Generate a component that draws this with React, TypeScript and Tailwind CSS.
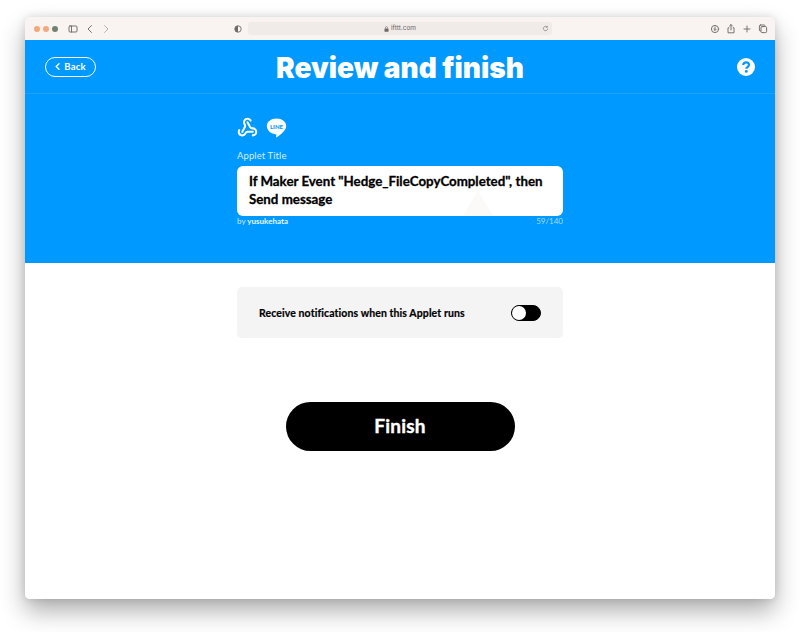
import React from "react";
import { Webhook } from "lucide-react";

function ToolbarIcon({ children, className }: { children: React.ReactNode; className?: string }) {
  return (
    <svg width="12" height="12" viewBox="0 0 12 12" fill="none" stroke="#77726f" strokeWidth="1" strokeLinecap="round" strokeLinejoin="round" className={className}>
      {children}
    </svg>
  );
}

export default function App() {
  return (
    <div className="w-[800px] h-[632px] bg-white pt-[17px] px-[25px] overflow-hidden font-['Lato',sans-serif]">
      <div className="w-[750px] h-[582px] flex flex-col bg-white rounded-t-[6px] rounded-b-[5px] overflow-hidden shadow-[0_12px_24px_rgba(0,0,0,0.32),0_0_8px_rgba(0,0,0,0.12)]">
        {/* Browser toolbar */}
        <div className="h-[23px] shrink-0 bg-[#f9f3f1] flex items-center relative">
          <div className="flex items-center gap-[3px] ml-[8.5px]">
            <span className="w-[6px] h-[6px] rounded-full bg-[#f3a876]" />
            <span className="w-[6px] h-[6px] rounded-full bg-[#f1aa7c]" />
            <span className="w-[6px] h-[6px] rounded-full bg-[#74806f]" />
          </div>
          <ToolbarIcon className="ml-[9.5px]">
            <rect x="2" y="3" width="8" height="6" rx="1" />
            <path d="M4.5 3v6" />
          </ToolbarIcon>
          <ToolbarIcon className="ml-[5px]">
            <path d="M7.5 2.5 4 6l3.5 3.5" />
          </ToolbarIcon>
          <ToolbarIcon className="ml-[3.6px] opacity-50">
            <path d="M4.5 2.5 8 6l-3.5 3.5" />
          </ToolbarIcon>
          <svg width="8" height="8" viewBox="0 0 8 8" className="ml-[122.4px]">
            <circle cx="4" cy="4" r="3.2" fill="#f9f3f1" stroke="#6f6b69" strokeWidth="0.9" />
            <path d="M4 .8a3.2 3.2 0 0 0 0 6.4z" fill="#6f6b69" />
          </svg>
          <div className="ml-[6px] w-[304px] h-[13px] rounded-[3px] bg-[#f0eae8] flex items-center justify-center gap-[2px] relative">
            <svg width="5" height="6" viewBox="0 0 5 6">
              <rect x=".5" y="2.500" width="4" height="3.200" rx=".5" fill="#6d6967" />
              <path d="M1.400 2.600V1.700a1.100 1.100 0 0 1 2.200 0v.9" fill="none" stroke="#6d6967" strokeWidth=".6" />
            </svg>
            <span className="text-[6.5px] leading-none text-[#6d6967] font-['Inter',sans-serif]">ifttt.com</span>
            <svg width="7" height="7" viewBox="0 0 8 8" fill="none" stroke="#8b8684" strokeWidth="0.9" className="absolute right-[3px] top-[3px]">
              <path d="M6.5 4a2.5 2.5 0 1 1-.8-1.8M6 1v1.6H4.4" />
            </svg>
          </div>
          <div className="ml-auto mr-[6.500px] flex items-center gap-[4px]">
            <ToolbarIcon>
              <circle cx="6" cy="6" r="3.6" />
              <path d="M6 4v3.2M4.8 6.200 6 7.400l1.200-1.200" />
            </ToolbarIcon>
            <ToolbarIcon>
              <path d="M3.800 4.800H3v5h6v-5h-.8M6 7V1.600M4.600 3 6 1.600 7.400 3" />
            </ToolbarIcon>
            <ToolbarIcon>
              <path d="M6 3v6M3 6h6" />
            </ToolbarIcon>
            <ToolbarIcon>
              <rect x="2.400" y="2" width="5.600" height="6" rx="1" />
              <rect x="4" y="3.600" width="5.600" height="6" rx="1" fill="#f9f3f1" />
            </ToolbarIcon>
          </div>
        </div>

        {/* Blue hero */}
        <div className="h-[223px] shrink-0 bg-[#0099ff] flex flex-col">
          <div className="h-[54px] shrink-0 border-b border-[#1aa3ff] grid grid-cols-[1fr_auto_1fr] items-center px-[20px]">
            <div className="justify-self-start w-[51px] h-[20px] rounded-full border-[1.5px] border-white flex items-center justify-center gap-[4px] text-white">
              <svg width="5" height="7" viewBox="0 0 5 7" fill="none" stroke="white" strokeWidth="1.4" strokeLinecap="round" strokeLinejoin="round">
                <path d="M4 .8 1.200 3.500 4 6.200" />
              </svg>
              <span className="text-[9.5px] leading-none font-bold tracking-[0.2px]">Back</span>
            </div>
            <h1 className="font-['Inter',sans-serif] text-[28px] leading-none pt-[2px] font-black text-white">Review and finish</h1>
            <svg width="18" height="18" viewBox="0 0 18 18" className="justify-self-end">
              <circle cx="9" cy="9" r="9" fill="white" />
              <path d="M6.200 7c0-1.700 1.300-2.700 2.900-2.700S12 5.300 12 6.800c0 1.300-.8 1.900-1.600 2.400-.7.4-1 .8-1 1.500" fill="none" stroke="#0099ff" strokeWidth="2.200" />
              <circle cx="9.300" cy="13.400" r="1.400" fill="#0099ff" />
            </svg>
          </div>

          <div className="w-[326px] ml-[212px] flex flex-col">
            <div className="flex items-center gap-[8px] mt-[23px]">
              <Webhook size={21} strokeWidth={2.3} color="white" />
              <svg width="21" height="20" viewBox="0 0 20 20">
                <path d="M10 .5c5.400 0 9.700 3.300 9.700 7.500 0 4.400-5.500 8.600-9.400 11.300-.6.300-.8-.1-.7-.6l.3-2.300C4.500 15.900.3 12.400.3 8 .3 3.800 4.600.5 10 .5z" fill="white" />
                <text x="10" y="10.500" textAnchor="middle" fontSize="6" fontWeight="900" fill="#0099ff" fontFamily="Lato, sans-serif">LINE</text>
              </svg>
            </div>
            <div className="text-[9.500px] leading-none text-[#d5eeff] mt-[13px] tracking-[0.1px]">Applet Title</div>
            <div className="relative h-[50px] mt-[5px] bg-white rounded-[6px] px-[12px] pt-[6px] overflow-hidden">
              <div className="absolute left-[226px] bottom-0 w-0 h-0 border-x-[15px] border-x-transparent border-b-[26px] border-b-[#fbfaf9]" />
              <div className="relative text-[13.300px] leading-[18px] font-bold text-black [-webkit-text-stroke:0.3px_black]">
                If Maker Event "Hedge_FileCopyCompleted", then Send message
              </div>
            </div>
            <div className="flex justify-between items-center text-[8px] leading-[10px]">
              <span className="text-[#cdeaff]">
                by <span className="font-bold text-[#e6f5ff]">yusukehata</span>
              </span>
              <span className="text-[#a5dbff]">59/140</span>
            </div>
          </div>
        </div>

        {/* Body */}
        <div className="flex-1 flex flex-col items-center bg-white">
          <div className="w-[326px] h-[51px] mt-[24px] rounded-[5px] bg-[#f4f4f4] flex items-center justify-between px-[22px]">
            <span className="pt-[2px] text-[10.500px] leading-none font-bold text-black tracking-[0.1px] [-webkit-text-stroke:0.2px_black]">Receive notifications when this Applet runs</span>
            <div className="w-[30px] h-[16px] rounded-full bg-black border border-black flex items-center">
              <span className="w-[14px] h-[14px] rounded-full bg-white" />
            </div>
          </div>
          <button className="w-[229px] h-[49px] mt-[64px] pb-[2px] rounded-full bg-black text-white text-[19px] leading-none font-bold tracking-[0.2px] [-webkit-text-stroke:0.4px_white]">Finish</button>
        </div>
      </div>
    </div>
  );
}
